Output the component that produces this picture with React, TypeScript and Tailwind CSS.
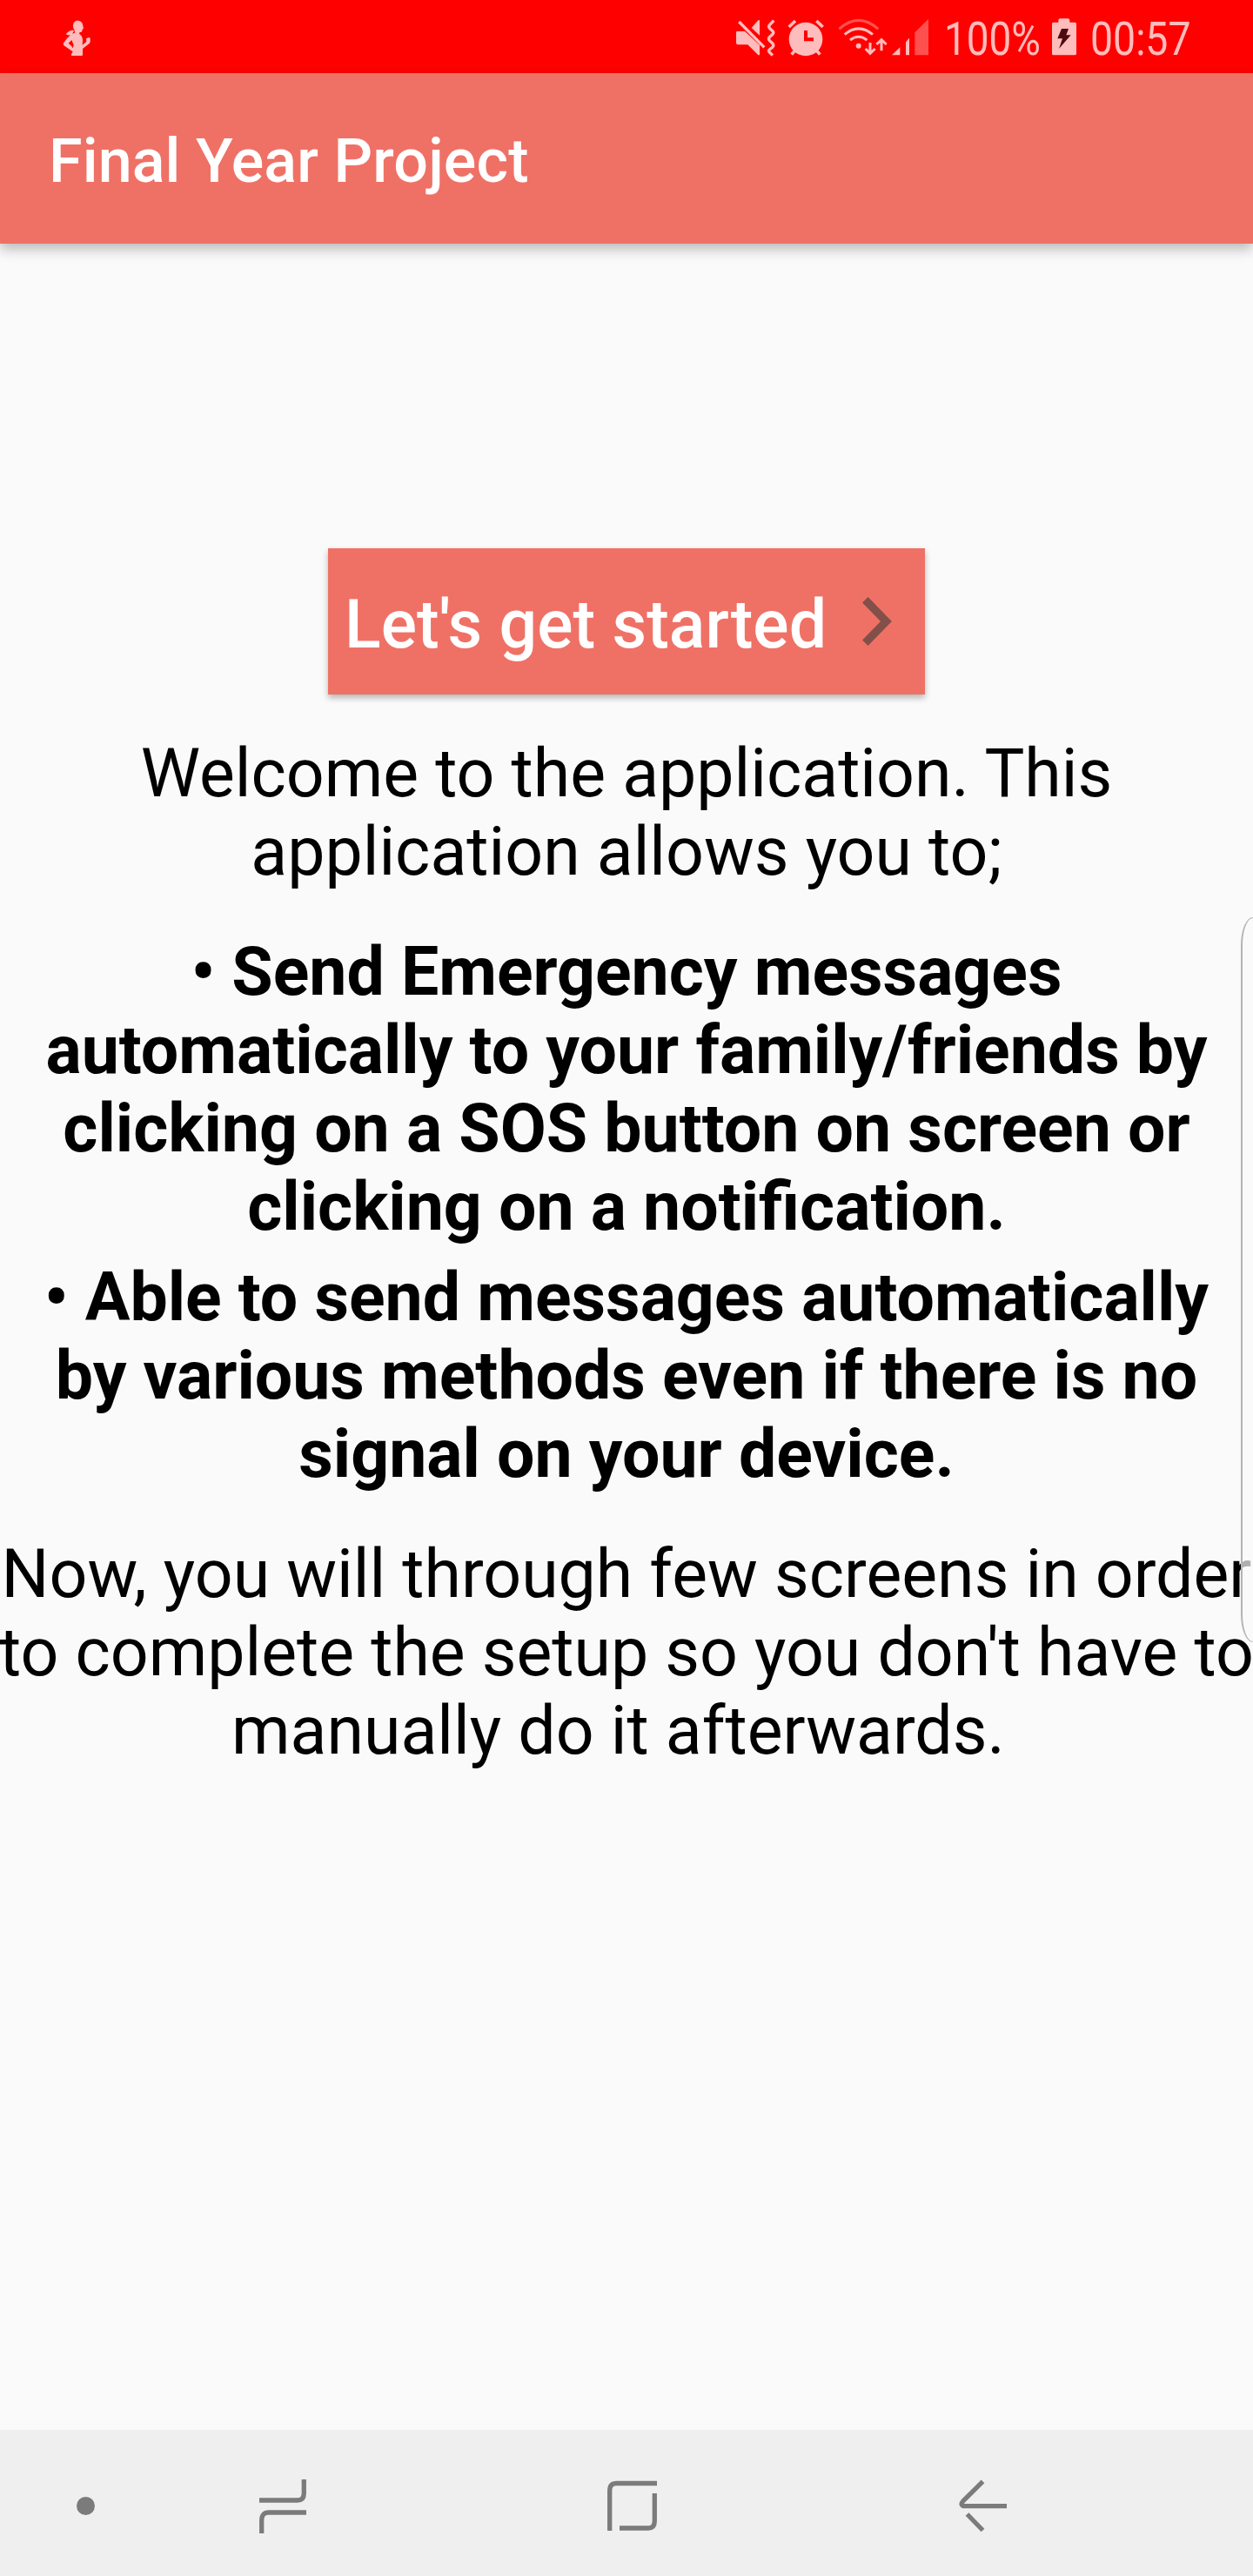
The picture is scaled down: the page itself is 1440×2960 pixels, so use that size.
import React from "react";

const PALE = "#ffbcbc";
const NAV = "#7b7b7b";

function RunnerIcon() {
  return (
    <svg className="ml-[71px] mt-[22px] h-[44px] w-[36px] shrink-0" viewBox="63 66 108 132" fill={PALE}>
      <path d="M117 71C129 71 136 79 136 89L138 98L134 101C134 108 131 111 125 111L123 116C131 121 135 129 135 139L134 155L148 144L147 133L156 129L161 131V145L157 151L135 168V187L134 192H96V187L101 178L70 157L68 149L82 131L97 117L108 113L107 105C104 100 102 96 102 90C102 78 108 71 117 71ZM97 138L86 149L96 158L101 166L104 155Z" fillRule="evenodd" />
      <path d="M105 105C97 102 88 105 77 118C88 124 96 123 101 114Z" />
    </svg>
  );
}

function MuteIcon() {
  return (
    <svg className="ml-[738px] mt-[20px] h-[46px] w-[48px] shrink-0" viewBox="45 60 144 138" fill={PALE}>
      <path d="M50 108H78L129 155V190H124L88 154H54Q48 154 48 148V114Q48 108 50 108Z" />
      <path d="M101 96L124 70H129V122Z" />
      <path d="M62 70L151 153" stroke="#f00" strokeWidth="8" />
      <path d="M58 75L145 163" stroke={PALE} strokeWidth="10" />
      <path d="M178 71L164 85Q158 91 164 98L174 107Q179 112 174 118L163 128Q158 134 163 140L174 150Q179 156 174 162L163 171Q158 176 163 180L174 191" fill="none" stroke={PALE} strokeWidth="10" />
    </svg>
  );
}

function AlarmIcon() {
  return (
    <svg className="ml-[12px] mt-[20px] h-[46px] w-[44px] shrink-0" viewBox="225 60 132 138" fill={PALE}>
      <circle cx="288" cy="135" r="58" />
      <path d="M230 93L252 72M347 93L325 72M239 188L252 173M337 188L324 173" stroke={PALE} strokeWidth="11" />
      <path d="M288 105V136H315" fill="none" stroke="#f00" strokeWidth="12" />
    </svg>
  );
}

function WifiIcon() {
  return (
    <svg className="ml-[13px] mt-[20px] h-[46px] w-[58px] shrink-0" viewBox="396 60 174 138" fill="none" stroke={PALE}>
      <path d="M403 100Q470 40 538 100" stroke="#ff4f4f" strokeWidth="9" />
      <path d="M422 119Q470 78 519 119" strokeWidth="9" />
      <path d="M441 138Q470 116 499 138" strokeWidth="9" />
      <circle cx="470" cy="158" r="9" fill={PALE} stroke="none" />
      <path d="M510 147V184M494 168L510 184L527 168M549 175V138M532 153L549 137L566 153" strokeWidth="9" />
    </svg>
  );
}

function SignalIcon() {
  return (
    <svg className="ml-[4px] mt-[20px] h-[46px] w-[44px] shrink-0" viewBox="585 60 132 138" fill={PALE}>
      <path d="M588 190L616 163V190Z" />
      <path d="M636 145L648 131V190H636Z" />
      <path d="M667 112L714 65V190H667Z" fill="#ff5050" />
    </svg>
  );
}

function BatteryIcon() {
  return (
    <svg className="mt-[20px] h-[46px] w-[28px] shrink-0" viewBox="393 60 84 138" fill={PALE}>
      <path d="M398 77H415V70Q415 64 421 64H448Q454 64 454 70V77H472Q477 77 477 82V185Q477 190 472 190H398Q393 190 393 185V82Q393 77 398 77Z" />
      <path d="M426 99H450L442 121H458L417 168L429 133H412Z" fill="#4d0b10" />
    </svg>
  );
}

function StatusBar() {
  return (
    <div className="flex h-[84px] shrink-0 items-start bg-[#ff0000] text-[53px] leading-[62px] text-[#ffbcbc]">
      <RunnerIcon />
      <MuteIcon />
      <AlarmIcon />
      <WifiIcon />
      <SignalIcon />
      <span className="ml-[17px] mt-[14px] w-[124px] shrink-0 origin-left scale-x-[0.865] whitespace-nowrap">100%</span>
      <BatteryIcon />
      <span className="ml-[16px] mt-[14px] origin-left scale-x-[0.875] whitespace-nowrap">00:57</span>
    </div>
  );
}

function NavBar() {
  return (
    <nav className="flex h-[168px] shrink-0 items-start bg-[#efefef]">
      <div className="ml-[88px] mt-[77px] size-[21px] rounded-full bg-[#7b7b7b]" />
      <svg className="ml-[189px] mt-[57px] h-[62px] w-[54px]" viewBox="0 0 54 62" fill="none" stroke={NAV} strokeWidth="5.3">
        <path d="M0 24H44Q51.3 24 51.3 16V0M54 38H11Q2.7 38 2.7 47V62" />
      </svg>
      <svg className="ml-[346px] mt-[58px] h-[58px] w-[57px]" viewBox="0 0 57 58" fill="none" stroke={NAV} strokeWidth="5.3">
        <path d="M2.7 58V12Q2.7 3.5 11 3.5H57M54.3 15V47Q54.3 55 47 55H14" />
      </svg>
      <svg className="ml-[346px] mt-[55px] h-[64px] w-[58px]" viewBox="1101 2847 58 64" fill="none" stroke={NAV} strokeWidth="5.3">
        <path d="M1129.500 2851.300L1106.600 2874.200Q1104 2877 1106 2879Q1107 2879.700 1109 2879.700H1157M1111.500 2889L1129.500 2907.500" />
      </svg>
    </nav>
  );
}

export default function App() {
  return (
    <div className="relative flex h-[2960px] w-[1440px] flex-col overflow-hidden bg-[#fafafa] font-['Roboto',sans-serif] text-black">
      <StatusBar />
      <header className="z-10 flex h-[196px] shrink-0 items-center bg-[#ef7166] pl-[56px] pt-[6px] shadow-[0_6px_14px_rgba(0,0,0,0.27)]">
        <h1 className="text-[70px] font-medium leading-[82px] tracking-[0.12px] text-white">Final Year Project</h1>
      </header>
      <main className="flex flex-1 flex-col items-center pt-[350px] text-center text-[77px] leading-[90px]">
        <button className="flex h-[168px] w-[686px] items-center bg-[#ef7166] pl-[19px] text-left font-medium text-white shadow-[0_4px_7px_rgba(0,0,0,0.28)]">
          <span className="mt-[8px] w-[595px] whitespace-nowrap tracking-[0.08px]">Let's get started</span>
          <svg className="h-[56px] w-[34px]" viewBox="0 0 34 56" fill="none" stroke="#824f49" strokeWidth="9.200">
            <path d="M3.300 3.300L27.500 28L3.300 52.700" />
          </svg>
        </button>
        <p className="mt-[46px] whitespace-nowrap">
          Welcome to the application. This
          <br />
          application allows you to;
        </p>
        <p className="mt-[48px] whitespace-nowrap font-bold">
          • Send Emergency messages
          <br />
          automatically to your family/friends by
          <br />
          clicking on a SOS button on screen or
          <br />
          clicking on a notification.
        </p>
        <p className="mt-[14px] whitespace-nowrap font-bold">
          • Able to send messages automatically
          <br />
          by various methods even if there is no
          <br />
          signal on your device.
        </p>
        <p className="mt-[48px] whitespace-nowrap">
          Now, you will through few screens in order
          <br />
          to complete the setup so you don't have to
          <br />
          manually do it afterwards.{"\u00a0"}
        </p>
      </main>
      <div className="absolute right-0 top-[1054px] h-[833px] w-[14px] rounded-l-[14px_32px] border-y border-l-2 border-[#b4b4b4] bg-[#fafafa]/70" />
      <NavBar />
    </div>
  );
}
